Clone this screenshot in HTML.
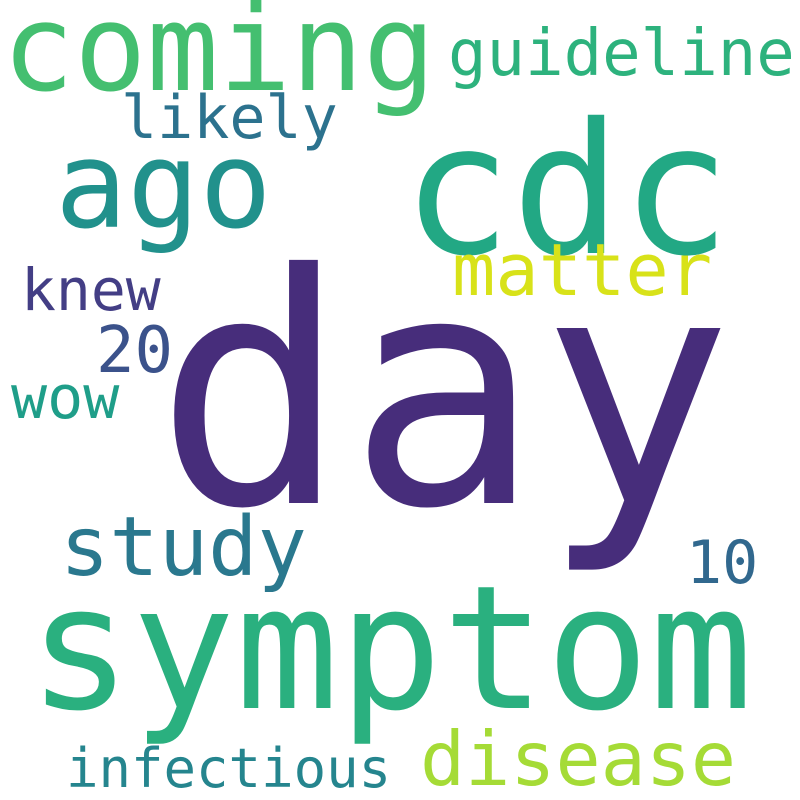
<!DOCTYPE html>
<html><head><meta charset="utf-8"><style>
html,body{margin:0;padding:0;background:#fff;width:800px;height:800px;overflow:hidden}
svg text{font-family:"DejaVu Sans Mono","Liberation Mono",monospace}
</style></head><body>
<svg width="800" height="800" xmlns="http://www.w3.org/2000/svg">
<rect width="800" height="800" fill="#fff"/>
<text x="155" y="503" font-size="320" fill="#472d7b">day</text>
<text x="28" y="708" font-size="172" fill="#2ab07f">symptom</text>
<text x="402" y="253" font-size="182" fill="#22a884">cdc</text>
<text x="2" y="90" font-size="120" fill="#44bf70">coming</text>
<text x="55" y="227" font-size="120" fill="#21918c">ago</text>
<text x="448" y="75" font-size="64" fill="#2db27d">guideline</text>
<text x="121" y="138" font-size="60" fill="#2c728e">likely</text>
<text x="452" y="295" font-size="72" fill="#d8e219">matter</text>
<text x="21" y="310" font-size="58" fill="#433e85">knew</text>
<text x="96" y="372" font-size="64" fill="#3b528b">20</text>
<text x="11" y="418" font-size="60" fill="#1f9e89">wow</text>
<text x="60" y="575" font-size="82" fill="#2a788e">study</text>
<text x="686" y="583" font-size="60" fill="#31688e">10</text>
<text x="420" y="785" font-size="75" fill="#a5db36">disease</text>
<text x="66" y="787" font-size="54" fill="#25858e">infectious</text>
</svg>
</body></html>
